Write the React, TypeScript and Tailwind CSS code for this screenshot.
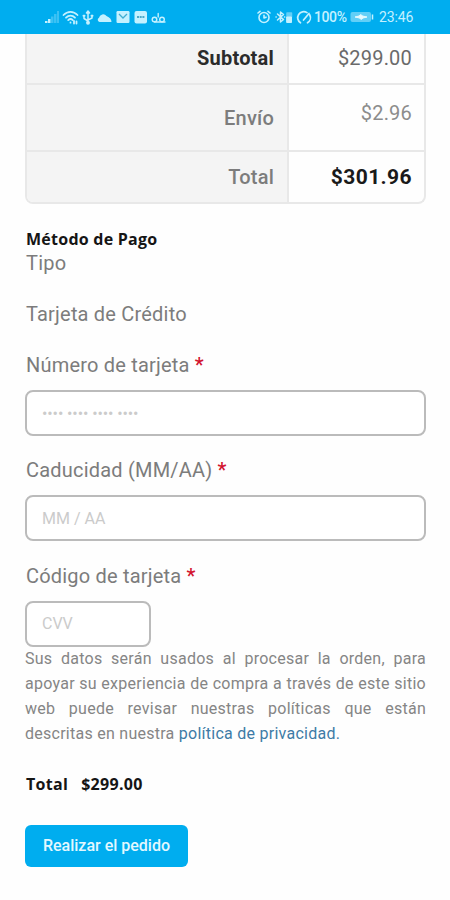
import {useState} from "react";

type FieldProps = {
    id: string;
    label: string;
    placeholder: string;
    inputClass: string;
};

const icon = {fill: "none", stroke: "currentColor", strokeLinecap: "round", strokeLinejoin: "round"} as const;

function StatusBar() {
    return (
        <header className="h-[34px] bg-[#00adef] text-[#c4f1ff] flex items-center justify-between pl-[44px] pr-[36px]">
            <div className="flex items-center">
                {/* signal */}
                <svg width="16" height="14" viewBox="0 0 16 14" fill="currentColor">
                    <path d="M1 11h2.5v2H1zM4 9h2.5v4H4z" />
                    <path d="M7 6.500h2.500V13H7zM10 4h2.500v9H10zM13 1h2v12h-2z" opacity="0.3" />
                </svg>
                {/* wifi */}
                <svg className="ml-[2px]" width="17" height="15" viewBox="0 0 17 15" {...icon} strokeWidth="1.8">
                    <path d="M1.5 5c4-4.3 10-4.3 14 0M4 7.7c2.7-2.8 6.3-2.8 9 0M6.2 10.1c1.4-1.4 3.2-1.4 4.6 0" />
                    <path d="M8.5 12.5v.2M12 11v2.5M14.5 13.5v-2" />
                </svg>
                {/* usb */}
                <svg className="ml-[3px]" width="12" height="15" viewBox="0 0 12 15" {...icon} strokeWidth="1.5">
                    <path d="M6 2v10M6 11L2 8.5V6M6 10l4-2V5.5" />
                    <path d="M4.5 3L6 1l1.5 2z" fill="currentColor" />
                    <circle cx="6" cy="12.8" r="1.2" fill="currentColor" />
                    <path d="M1.5 5.8h1M9.5 5.8h1" strokeWidth="2" />
                </svg>
                {/* cloud */}
                <svg className="ml-[3px]" width="15" height="14" viewBox="0 0 15 14" fill="currentColor">
                    <path d="M2.500 12A2.300 2.300 0 0 1 2 7.700 4.200 4.200 0 0 1 9.500 6Q14.500 8 14.500 12z" />
                </svg>
                {/* mail */}
                <svg className="ml-[4px]" width="14" height="14" viewBox="0 0 14 14">
                    <rect x="0.5" y="1" width="13" height="12" rx="1.2" fill="currentColor" />
                    <path d="M3 4l4 4 4-4" fill="none" stroke="#3faed2" strokeWidth="1.3" />
                </svg>
                {/* messages */}
                <svg className="ml-[4px]" width="14" height="14" viewBox="0 0 14 14">
                    <rect x="0.5" y="1" width="12.5" height="12.5" rx="2" fill="currentColor" />
                    <path d="M3 7h7.5" stroke="#4aa9ca" strokeWidth="1.8" strokeDasharray="2 0.7" />
                </svg>
                {/* voicemail */}
                <svg className="ml-[3px]" width="16" height="14" viewBox="0 0 16 14" {...icon} strokeWidth="1.4">
                    <circle cx="3.5" cy="9.5" r="2.3" />
                    <circle cx="11" cy="9.5" r="2.3" />
                    <path d="M3.500 12h10.500M7.200 7V3.500" />
                </svg>
            </div>

            <div className="flex items-center">
                {/* alarm */}
                <svg width="14" height="14" viewBox="0 0 14 14" {...icon} strokeWidth="1.6">
                    <circle cx="7" cy="7.5" r="5" />
                    <path d="M7 5.3v2.7l2-.8M1 3l2-1.7M13 3l-2-1.7" />
                </svg>
                {/* bluetooth with headset battery */}
                <svg className="ml-[4px]" width="18" height="14" viewBox="0 0 18 14" {...icon} strokeWidth="1.5">
                    <path d="M2.5 4l6 5.5L5.5 12V2l3 2.5-6 5.5M1 7h.2M9.5 7h.2" />
                    <path d="M12 3h4.5v4H12z" fill="currentColor" opacity="0.5" />
                    <path d="M12 7h4.5v5.500H12z" fill="currentColor" strokeWidth="1" />
                </svg>
                {/* data saver gauge */}
                <svg className="ml-[3px]" width="17" height="15" viewBox="0 0 17 15" {...icon} strokeWidth="1.7">
                    <path d="M4.5 12.8A6 6 0 1 1 11 2.6M13.8 5A6 6 0 0 1 11.5 12.8M7.5 10L13 3.5" />
                </svg>
                <span className="ml-[1px] w-[34px] text-[14px] leading-[20px] tracking-[-0.4px] font-medium">100%</span>
                {/* battery */}
                <svg className="ml-[2px]" width="25" height="12" viewBox="0 0 25 12">
                    <rect x="0.5" y="1" width="20.5" height="10" rx="2" fill="currentColor" opacity="0.5" />
                    <path d="M5 6l4-1 2-1.500 1.500 1.500L17 6l-4 1-2 1.500L9.500 7z" fill="#e6faff" stroke="#e6faff" />
                    <path d="M22.5 3.5v5" stroke="currentColor" strokeWidth="1.5" />
                </svg>
                <span className="ml-[4px] w-[35px] text-[14px] leading-[20px] tracking-[-0.1px]">23:46</span>
            </div>
        </header>
    );
}

function Field({id, label, placeholder, inputClass}: FieldProps) {
    const [value, setValue] = useState("");

    return (
        <div className="flex flex-col items-start">
            <label htmlFor={id} className="pl-px text-[20px] leading-[26px] tracking-[0.2px] whitespace-nowrap">
                {label} <span className="text-[#d2142f] font-medium">*</span>
            </label>
            <input
                id={id}
                value={value}
                onChange={(e) => setValue(e.target.value)}
                placeholder={placeholder}
                className={`mt-[12px] h-[46px] border-2 border-[#bbbbbb] rounded-lg bg-white pl-[15px] text-[16px] placeholder:text-[#cbcbcb] focus:outline-none ${inputClass}`}
            />
        </div>
    );
}

export default function App() {
    return (
        <div className="h-[900px] overflow-hidden bg-[#fefefe] text-[#7c7c7c] font-[Roboto,sans-serif]">
            <StatusBar />

            <main className="ml-[25px] w-[401px]">
                <div className="grid grid-cols-[260px_1fr] grid-rows-[49px_67px_52px] border-2 border-t-0 border-[#e8e8e8] rounded-b-lg overflow-hidden text-right text-[20px] tracking-[0.2px]">
                    <div className="bg-[#f4f4f4] pr-[13px] leading-[48px] font-bold text-[#2b2b2b]">Subtotal</div>
                    <div className="border-l-2 border-[#e8e8e8] pr-[12px] leading-[48px] text-[#6a6a6a]">$299.00</div>
                    <div className="border-t-2 border-[#e8e8e8] bg-[#f4f4f4] pr-[13px] leading-[66px] font-medium">Envío</div>
                    <div className="border-t-2 border-l-2 border-[#e8e8e8] pr-[12px] leading-[57px] text-[#8c8c8c]">$2.96</div>
                    <div className="border-t-2 border-[#e8e8e8] bg-[#f4f4f4] pr-[13px] leading-[50px] font-medium">Total</div>
                    <div className="border-t-2 border-l-2 border-[#e8e8e8] pr-[12px] text-[21px] leading-[50px] tracking-[0.4px] font-bold text-[#1a1a1a]">$301.96</div>
                </div>

                <section className="mt-[23px] pl-px">
                    <h2 className="font-['Open_Sans',sans-serif] text-[16px] leading-[24px] tracking-[0.25px] font-bold text-[#151515]">
                        Método de Pago
                    </h2>
                    <p className="text-[20px] leading-[24px] tracking-[0.2px]">Tipo</p>
                    <p className="mt-[26px] text-[20px] leading-[26px] tracking-[0.2px]">Tarjeta de Crédito</p>
                </section>

                <div className="mt-[25px] flex flex-col gap-[21.4px]">
                    <Field id="card-number" label="Número de tarjeta" placeholder="•••• •••• •••• ••••" inputClass="w-full tracking-[-0.1px]" />
                    <Field id="card-expiry" label="Caducidad (MM/AA)" placeholder="MM / AA" inputClass="w-full" />
                    <Field id="card-cvc" label="Código de tarjeta" placeholder="CVV" inputClass="w-[126px]" />
                </div>

                <p className="-mt-px text-justify text-[16px] leading-[25px] tracking-[0.26px] text-[#858585]">
                    Sus datos serán usados al procesar la orden, para apoyar su experiencia de compra a través de este
                    sitio web puede revisar nuestras políticas que están descritas en nuestra{" "}
                    <a href="#privacidad" className="text-[#3d7ba6]">política de privacidad.</a>
                </p>

                <div className="mt-[26px] flex gap-[13px] pl-px font-['Open_Sans',sans-serif] text-[16px] leading-[24px] tracking-[0.3px] font-bold text-[#151515]">
                    <span>Total</span>
                    <span>$299.00</span>
                </div>

                <button className="mt-[29px] h-[42px] w-[163px] rounded-md bg-[#00adef] text-[16px] font-medium text-[#e3f8ff]">
                    Realizar el pedido
                </button>
            </main>
        </div>
    );
}
